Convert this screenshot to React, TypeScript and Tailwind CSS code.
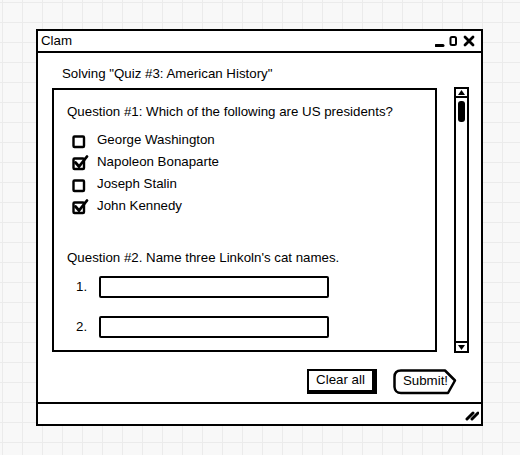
import React from 'react'

const font = "font-['Liberation_Sans',Arial,sans-serif]"

const Check = ({ checked }: { checked: boolean }) => (
  <svg width="17" height="17" viewBox="0 0 17 17" className="shrink-0">
    <rect x="1.5" y="4.5" width="10.5" height="10.5" fill="none" stroke="#000" strokeWidth="2.4" rx="1" />
    {checked && <path d="M3.5 8.5 L7 12.5 L15 2.5" fill="none" stroke="#000" strokeWidth="2.8" strokeLinecap="round" />}
  </svg>
)

const options = [
  { label: 'George Washington', checked: false },
  { label: 'Napoleon Bonaparte', checked: true },
  { label: 'Joseph Stalin', checked: false },
  { label: 'John Kennedy', checked: true },
]

const Field = ({ n }: { n: string }) => (
  <div className="flex items-center h-[22px]">
    <span className="w-[32px] pl-[9px] text-[13.3px]">{n}</span>
    <div className="w-[230px] h-[22px] border-2 border-black rounded-[2px] bg-white" />
  </div>
)

export default function App() {
  return (
    <div
      className={`${font} w-[520px] h-[455px] pt-[29px] pl-[36px] text-black bg-[#f8f8f8] bg-[linear-gradient(to_right,#ebebeb_1px,transparent_1px),linear-gradient(to_bottom,#ebebeb_1px,transparent_1px)] bg-[size:20px_20px] bg-[position:2px_2px]`}
    >
      <div className="w-[447px] h-[397px] border-2 border-black bg-white flex flex-col">
        {/* title bar */}
        <div className="h-[22px] border-b-2 border-black flex items-center justify-between pl-[3px] pr-[4px]">
          <span className="text-[13.3px] leading-none">Clam</span>
          <svg width="42" height="14" viewBox="0 0 42 14">
            <path d="M1 11.5 H8" stroke="#000" strokeWidth="3" strokeLinecap="round" />
            <rect x="15.5" y="3" width="5.5" height="8" rx="1.5" fill="none" stroke="#000" strokeWidth="2" />
            <path d="M30 3 L38 11 M38 3 L30 11" stroke="#000" strokeWidth="2.8" strokeLinecap="round" />
          </svg>
        </div>

        {/* content */}
        <div className="flex-1 flex flex-col">
          <div className="h-[35px] pl-[24px] pt-[13px] text-[13.3px] leading-[16px]">Solving "Quiz #3: American History"</div>
          <div className="flex pl-[14px]">
            <div className="w-[385px] h-[264px] border-2 border-black pl-[13px] pt-[14px]">
              <div className="text-[13.3px] leading-[16px]">Question #1: Which of the following are US presidents?</div>
              <div className="flex flex-col gap-[6px] mt-[12px] pl-[5px]">
                {options.map((o) => (
                  <div key={o.label} className="flex items-center gap-[8px] h-[16px]">
                    <Check checked={o.checked} />
                    <span className="text-[13.3px] leading-[16px]">{o.label}</span>
                  </div>
                ))}
              </div>
              <div className="text-[13.3px] leading-[16px] mt-[36px]">Question #2. Name three Linkoln's cat names.</div>
              <div className="flex flex-col gap-[18px] mt-[10px]">
                <Field n="1." />
                <Field n="2." />
              </div>
            </div>
            {/* scrollbar */}
            <div className="ml-[17px] w-[15px] h-[266px] -mt-[1px] border-2 border-black flex flex-col items-center">
              <div className="w-full h-[9px] border-b-2 border-black flex items-center justify-center">
                <svg width="7" height="5" viewBox="0 0 7 5"><path d="M3.5 0 L7 5 H0 Z" fill="#000" /></svg>
              </div>
              <div className="w-[7px] h-[21px] mt-[3px] rounded-[3px] bg-black" />
              <div className="flex-1" />
              <div className="w-full h-[10px] border-t-2 border-black flex items-center justify-center">
                <svg width="7" height="5" viewBox="0 0 7 5"><path d="M0 0 H7 L3.5 5 Z" fill="#000" /></svg>
              </div>
            </div>
          </div>

          {/* buttons */}
          <div className="flex justify-end items-start gap-[15px] pr-[24px] mt-[16px]">
            <button className="w-[70px] h-[25px] border-2 border-black border-r-[5px] border-b-[4px] bg-white text-[13.3px] leading-none pb-[1px]">
              Clear all
            </button>
            <button className="relative w-[65px] h-[26px] text-[13.3px] leading-none">
              <svg className="absolute inset-0" width="65" height="26" viewBox="0 0 65 26">
                <path
                  d="M9 1.5 H53 L63 11.5 L56 24 H9 Q3 24 2.5 18 V8 Q2.5 1.5 9 1.5 Z"
                  fill="#fff"
                  stroke="#000"
                  strokeWidth="2.5"
                  strokeLinejoin="round"
                />
              </svg>
              <span className="relative left-[1px] -top-[1px]">Submit!</span>
            </button>
          </div>
        </div>

        {/* status bar */}
        <div className="h-[22px] border-t-2 border-black flex items-end justify-end pr-[2px] pb-[3px]">
          <svg width="14" height="11" viewBox="0 0 14 11">
            <path d="M2 9 L8 3 M7 9 L13 3" stroke="#000" strokeWidth="3" strokeLinecap="round" />
          </svg>
        </div>
      </div>
    </div>
  )
}
